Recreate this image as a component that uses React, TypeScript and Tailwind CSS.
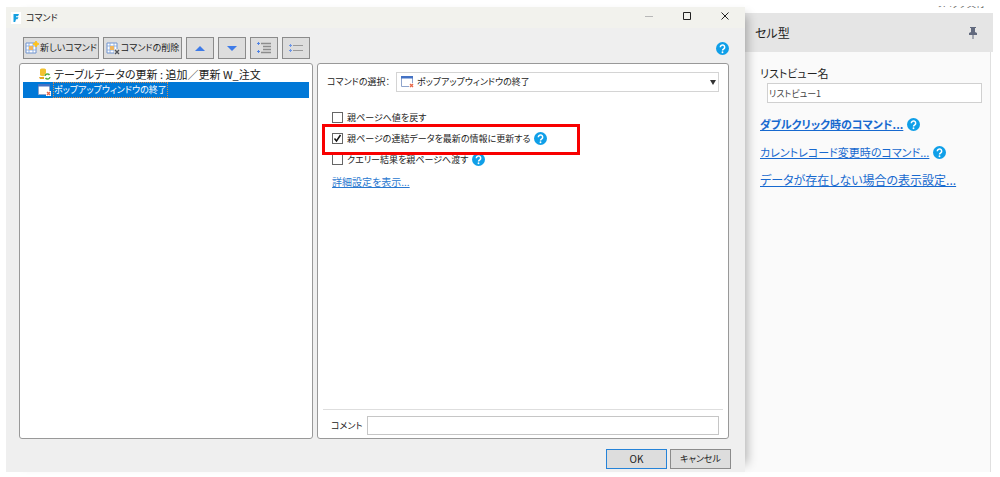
import type { ReactNode } from "react";

const HelpIcon = ({ label }: { label: string }) => (
  <button type="button" aria-label={label} className="size-[13px] shrink-0">
    <svg viewBox="0 0 24 24" className="size-full">
      <circle cx="12" cy="12" r="12" fill="#0f9fe8" />
      <path d="M8 9.5a4 4 0 1 1 6.3 3.2c-1.6 1.1-2.2 1.6-2.2 3" fill="none" stroke="#fff" strokeWidth="2.8" />
      <circle cx="12" cy="19" r="1.7" fill="#fff" />
    </svg>
  </button>
);

const WindowIcon = () => (
  <svg viewBox="0 0 13 12" className="h-3 w-[13px] shrink-0">
    <path d="M.5.5h11v10H.5z" fill="#fff" stroke="#8ea4cc" />
    <path d="M0 0h12v2.500H0z" fill="#4472c4" />
    <path d="M8 7h5v5H8z" fill="#fff" />
    <path d="M9 8l3 3M12 8l-3 3" stroke="#e8684a" strokeWidth="1.4" />
  </svg>
);

const TableUpdateIcon = () => (
  <svg viewBox="0 0 13 12" className="h-3 w-[13px] shrink-0">
    <path d="M2 1.500C2 0 8 0 8 1.500V7C8 8.500 2 8.500 2 7z" fill="#f2c230" />
    <path d="M1 9h5v2H2z" fill="#e3a921" />
    <circle cx="9.500" cy="8.500" r="3.200" fill="#fff" />
    <path d="M7 8a2.500 2.500 0 0 1 4.500-1M12 9a2.500 2.500 0 0 1-4.500 1" fill="none" stroke="#58ad3c" strokeWidth="1.4" />
  </svg>
);

const GridIcon = ({ children }: { children: ReactNode }) => (
  <svg viewBox="0 0 14 14" className="size-[14px] shrink-0">
    <path d="M1 2h10v10H1z" fill="#fff" stroke="#6f93cf" />
    <path d="M4 2v10M8 2v10M1 5h10M1 9h10" stroke="#7fa3dc" strokeWidth=".8" />
    <path d="M4 5h4v4H4z" fill="#f0b55c" />
    {children}
  </svg>
);

const toolButton = "flex h-[22px] items-center justify-center border border-[#8b8b8b] bg-[#dddddd]";

const options = [
  { id: "return-value", text: "親ページへ値を戻す", checked: false, help: false },
  { id: "refresh-parent", text: "親ページの連結データを最新の情報に更新する", checked: true, help: true },
  { id: "pass-query", text: "クエリー結果を親ページへ渡す", checked: false, help: true },
];

function TitleBar() {
  return (
    <header className="flex h-[21px] items-center bg-[#f2f2ed] pr-4 pl-[5px]">
      <svg viewBox="0 0 10 12" className="h-3 w-[10px]">
        <path d="M0 0h10v12H0z" fill="#fff" />
        <path d="M2.500 2H8L7 4.200H5v1h2.500l-1 2H5L4.200 10H2.500z" fill="#159fe0" />
      </svg>
      <h1 className="ml-[5px] flex-1 leading-4">コマンド</h1>
      <div className="flex gap-[30px] pb-1">
        <button type="button" aria-label="最小化" className="size-2">
          <svg viewBox="0 0 8 8"><path d="M0 4.500h8" stroke="#b8b8b8" /></svg>
        </button>
        <button type="button" aria-label="最大化" className="size-2">
          <svg viewBox="0 0 8 8"><path d="M.5.5h7v7h-7z" fill="none" stroke="#222" /></svg>
        </button>
        <button type="button" aria-label="閉じる" className="size-2">
          <svg viewBox="0 0 8 8"><path d="M.5.5l7 7m0-7l-7 7" stroke="#222" /></svg>
        </button>
      </div>
    </header>
  );
}

function Toolbar() {
  return (
    <div className="mt-[9px] flex items-center gap-1 pr-4 pl-[17px]">
      <button type="button" className={`${toolButton} w-[76px] gap-px`}>
        <GridIcon>
          <path d="M11 0l1 2 2 1-2 1-1 2-1-2-2-1 2-1z" fill="#ffc21a" stroke="#ffc21a" />
        </GridIcon>
        <span className="whitespace-nowrap">新しいコマンド</span>
      </button>
      <button type="button" className={`${toolButton} w-[79px] gap-px`}>
        <GridIcon>
          <path d="M8 8h6v6H8z" fill="#ddd" />
          <path d="M9 9l4 4m0-4l-4 4" stroke="#4d5158" strokeWidth="1.3" />
        </GridIcon>
        <span className="whitespace-nowrap">コマンドの削除</span>
      </button>
      <button type="button" aria-label="上へ移動" className={`${toolButton} w-7`}>
        <svg viewBox="0 0 10 5" className="h-[5px] w-[10px]"><path d="M5 0l5 5H0z" fill="#3e7be8" /></svg>
      </button>
      <button type="button" aria-label="下へ移動" className={`${toolButton} w-7`}>
        <svg viewBox="0 0 10 5" className="h-[5px] w-[10px]"><path d="M0 0h10L5 5z" fill="#3e7be8" /></svg>
      </button>
      <button type="button" aria-label="すべて展開" className={`${toolButton} w-7`}>
        <svg viewBox="0 0 14 12" className="h-3 w-[14px]">
          <path d="M4 1.500h10M6 4.500h8M6 7.500h8M4 10.500h10" stroke="#8c8c8c" strokeWidth="1.3" />
          <path d="M0 1.500h3M1.500 0v3M0 9.500h3M1.500 8v3" stroke="#4f83e6" />
        </svg>
      </button>
      <button type="button" aria-label="すべて折りたたむ" className={`${toolButton} w-7`}>
        <svg viewBox="0 0 14 8" className="h-2 w-[14px]">
          <path d="M4 1.500h10M4 6.500h10" stroke="#999" />
          <path d="M0 1.500h3M1.500 0v3M0 6.500h3M1.500 5v3" stroke="#6c96e8" />
        </svg>
      </button>
      <div className="ml-auto flex"><HelpIcon label="ヘルプ" /></div>
    </div>
  );
}

function CommandList() {
  return (
    <ul className="flex-[294] rounded-[3px] border border-[#999] bg-white px-[3px] py-[2px]">
      <li>
        <button type="button" className="flex h-4 w-full items-center gap-[3px] pl-[15px] text-[11px]">
          <TableUpdateIcon />
          <span className="whitespace-nowrap">テーブルデータの更新 : 追加／更新 W_注文</span>
        </button>
      </li>
      <li>
        <button type="button" aria-current="true" className="flex h-4 w-full items-center gap-[2px] bg-[#0078d7] pl-[15px] text-white">
          <WindowIcon />
          <span className="border border-dotted border-[#d78a4a] leading-[14px] whitespace-nowrap">ポップアップウィンドウの終了</span>
        </button>
      </li>
    </ul>
  );
}

function CommandSettings() {
  return (
    <section className="flex flex-[411] flex-col rounded-[3px] border border-[#999] bg-white px-[5px] pt-2 pb-[3px]">
      <div className="flex items-center pr-1 pl-1">
        <label htmlFor="command" className="w-[69px] whitespace-nowrap">コマンドの選択：</label>
        <div className="relative flex h-[20px] flex-1 items-center">
          <select id="command" className="size-full appearance-none border border-[#d4d4d4] bg-white pl-5">
            <option>ポップアップウィンドウの終了</option>
          </select>
          <span className="pointer-events-none absolute left-[5px]"><WindowIcon /></span>
          <svg viewBox="0 0 6 5" className="pointer-events-none absolute right-[3px] h-[5px] w-[6px]"><path d="M0 0h6L3 5z" fill="#333" /></svg>
        </div>
      </div>

      <div className="relative mt-[15px] pl-[9px]">
        {options.map((o) => (
          <div key={o.id} className="flex h-[21px] items-center gap-1">
            <input
              id={o.id}
              type="checkbox"
              defaultChecked={o.checked}
              className="peer size-[11px] appearance-none border border-[#666] bg-white"
            />
            <svg viewBox="0 0 11 11" className="pointer-events-none -ml-[15px] hidden size-[11px] peer-checked:block">
              <path d="M2.500 5.500l2 2.500 4-6" fill="none" stroke="#111" strokeWidth="1.5" />
            </svg>
            <label htmlFor={o.id} className="whitespace-nowrap">{o.text}</label>
            {o.help && <HelpIcon label={`${o.text}のヘルプ`} />}
          </div>
        ))}
        <div className="pointer-events-none absolute top-[17px] -left-px h-[31px] w-[258px] border-[3px] border-[#f80000]" />
      </div>
      <a href="#details" className="mt-1 ml-[9px] self-start text-[10px] text-[#2a78cf] underline">詳細設定を表示...</a>

      <div className="mt-auto flex items-center border-t border-[#dedede] pt-[6px] pr-1 pl-2">
        <label htmlFor="comment" className="w-9">コメント</label>
        <input id="comment" type="text" className="h-[19px] min-w-0 flex-1 border border-[#c6c6c6] bg-white px-1" />
      </div>
    </section>
  );
}

function CommandDialog() {
  return (
    <main className="z-10 mt-[7px] flex min-w-0 flex-1 flex-col bg-[#efefef] shadow-[10px_0_10px_-8px_rgba(0,0,0,0.3)]">
      <TitleBar />
      <Toolbar />
      <div className="mt-1 mr-4 ml-[13px] flex flex-1 gap-1">
        <CommandList />
        <CommandSettings />
      </div>
      <footer className="flex justify-end gap-[3px] pt-[10px] pr-[14px] pb-[3px]">
        <button type="button" className="h-5 w-[61px] border border-[#2583d8] bg-[#dddddd] text-[10px]">OK</button>
        <button type="button" className="h-5 w-[61px] border border-[#8b8b8b] bg-[#dddddd]">キャンセル</button>
      </footer>
    </main>
  );
}

function CellTypePanel() {
  return (
    <aside className="flex w-[248px] shrink-0 flex-col text-[11px]">
      {/* tail of the row scrolled away above the panel */}
      <div className="mt-[6px] mb-[3px] flex h-1 items-end justify-end overflow-hidden pr-2 text-[9px] leading-3 text-[#666]">
        <span>リバック文行</span>
      </div>
      <header className="flex h-[39px] items-center justify-between bg-[#e5e5e5] pr-4 pl-[10px]">
        <h2 className="text-xs">セル型</h2>
        <button type="button" aria-label="パネルを固定" className="h-3 w-2">
          <svg viewBox="0 0 8 12"><path d="M1 0h6v1H6v4l2 1v2H4.500v4h-1V8H0V6l2-1V1H1z" fill="#626a7e" /></svg>
        </button>
      </header>
      <div className="mr-[2px] flex flex-1 flex-col items-start border-r border-[#e0e0e0] bg-[#fafafa] pt-[11px] pr-2 pl-[15px]">
        <label htmlFor="list-name" className="leading-5">リストビュー名</label>
        <div className="flex w-full pl-[7px]">
          <input id="list-name" defaultValue="リストビュー1" className="h-5 w-full border border-[#d0d0d0] bg-white px-px text-[9px] text-[#444]" />
        </div>
        <div className="mt-[11px] flex flex-col gap-2 leading-5 whitespace-nowrap text-[#1769cf]">
          <div className="flex items-center gap-1">
            <a href="#double-click" className="font-bold underline">ダブルクリック時のコマンド...</a>
            <HelpIcon label="ダブルクリック時のコマンドのヘルプ" />
          </div>
          <div className="flex items-center gap-1">
            <a href="#current-record" className="underline">カレントレコード変更時のコマンド...</a>
            <HelpIcon label="カレントレコード変更時のコマンドのヘルプ" />
          </div>
          <a href="#empty-data" className="text-xs leading-5 underline">データが存在しない場合の表示設定...</a>
        </div>
      </div>
    </aside>
  );
}

export default function App() {
  return (
    <div
      lang="ja"
      className="flex min-h-screen overflow-hidden bg-white pr-[7px] pb-[5px] pl-[6px] font-['Noto_Sans_CJK_JP',sans-serif] text-[9px] leading-4 text-[#222] [font-feature-settings:'palt']"
    >
      <CommandDialog />
      <CellTypePanel />
    </div>
  );
}
